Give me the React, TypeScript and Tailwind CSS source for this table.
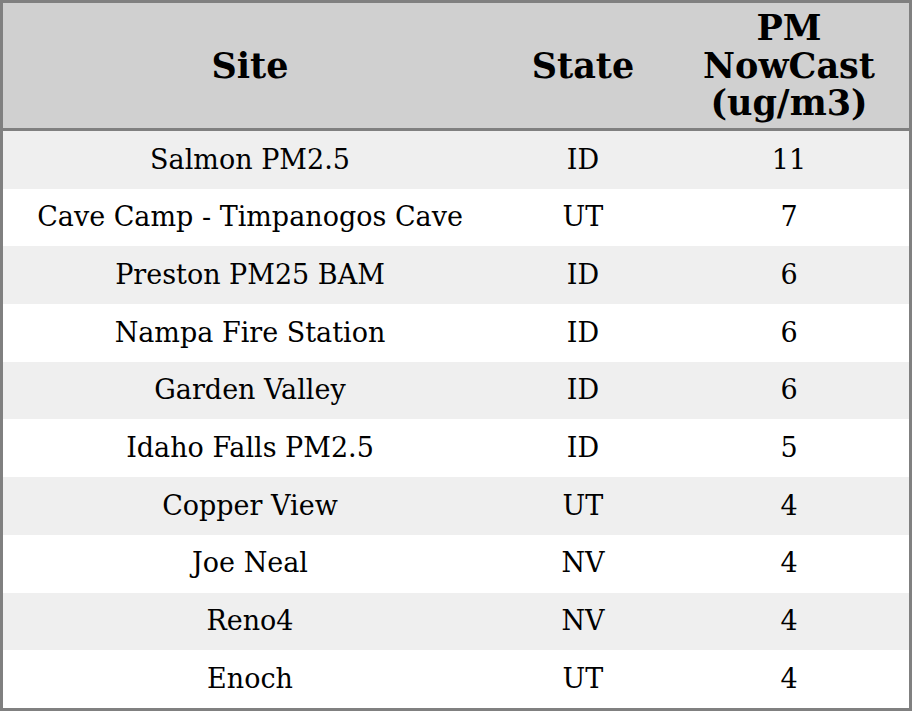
import React from "react";

const rows: [string, string, string][] = [
  ["Salmon PM2.5", "ID", "11"],
  ["Cave Camp - Timpanogos Cave", "UT", "7"],
  ["Preston PM25 BAM", "ID", "6"],
  ["Nampa Fire Station", "ID", "6"],
  ["Garden Valley", "ID", "6"],
  ["Idaho Falls PM2.5", "ID", "5"],
  ["Copper View", "UT", "4"],
  ["Joe Neal", "NV", "4"],
  ["Reno4", "NV", "4"],
  ["Enoch", "UT", "4"],
];

export default function App() {
  return (
    <div
      className="w-[912px] h-[711px] border-[3px] border-[#808080] bg-white text-black flex flex-col overflow-hidden"
      style={{ fontFamily: '"DejaVu Serif", serif' }}
    >
      <div className="h-[128px] shrink-0 bg-[#d0d0d0] border-b-[3px] border-[#808080] grid grid-cols-[494px_172px_1fr] items-center text-center font-bold text-[35px] leading-[37.5px]">
        <div>Site</div>
        <div>State</div>
        <div>
          PM
          <br />
          NowCast
          <br />
          (ug/m3)
        </div>
      </div>
      {rows.map((r, i) => (
        <div
          key={i}
          className={`h-[57.7px] shrink-0 grid grid-cols-[494px_172px_1fr] items-center text-center text-[27px] ${
            i % 2 === 0 ? "bg-[#efefef]" : "bg-white"
          }`}
        >
          <div>{r[0]}</div>
          <div>{r[1]}</div>
          <div>{r[2]}</div>
        </div>
      ))}
    </div>
  );
}
